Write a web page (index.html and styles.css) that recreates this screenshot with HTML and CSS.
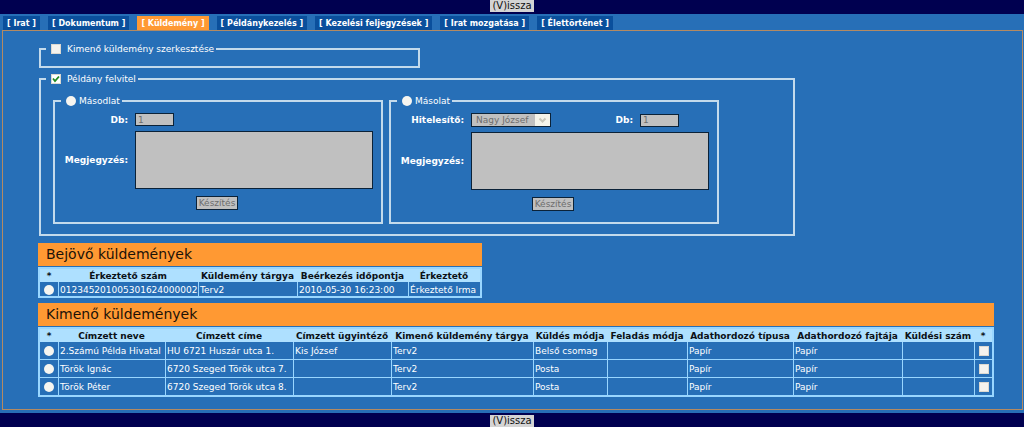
FILE: index.html
```html
<!DOCTYPE html>
<html lang="hu">
<head>
<meta charset="utf-8">
<title>Küldemény</title>
<link rel="stylesheet" href="styles.css">
</head>
<body>
<header class="bar bar-top"><button type="button" class="back">(V)issza</button></header>
<nav class="tabs">
  <a class="tab" href="#">[ Irat ]</a>
  <a class="tab" href="#">[ Dokumentum ]</a>
  <a class="tab active" href="#">[ Küldemény ]</a>
  <a class="tab" href="#">[ Példánykezelés ]</a>
  <a class="tab" href="#">[ Kezelési feljegyzések ]</a>
  <a class="tab" href="#">[ Irat mozgatása ]</a>
  <a class="tab" href="#">[ Élettörténet ]</a>
</nav>
<main class="panel">
  <fieldset class="group edit">
    <legend><label><input type="checkbox" class="check">Kimenő küldemény szerkesztése</label></legend>
  </fieldset>
  <fieldset class="group create">
    <legend><label><input type="checkbox" class="check" checked>Példány felvitel</label></legend>
    <div class="copies">
      <fieldset class="group copy">
        <legend><label><input type="radio" name="kind" class="radio">Másodlat</label></legend>
        <div class="form">
          <label for="db1">Db:</label>
          <div class="line"><input id="db1" class="field count" value="1" disabled></div>
          <label for="note1">Megjegyzés:</label>
          <textarea id="note1" class="field note" disabled></textarea>
          <button type="button" class="field make" disabled>Készítés</button>
        </div>
      </fieldset>
      <fieldset class="group copy">
        <legend><label><input type="radio" name="kind" class="radio">Másolat</label></legend>
        <div class="form">
          <label for="auth">Hitelesítő:</label>
          <div class="line">
            <span class="pick"><select id="auth" class="field" disabled><option>Nagy József</option></select><svg class="arrow" viewBox="0 0 15 12" aria-hidden="true"><rect width="15" height="12" fill="#f5f4ea"/><path d="M4.5 4.5 7.5 7.5 10.5 4.5" fill="none" stroke="#c9c7ba" stroke-width="2"/></svg></span>
            <span class="pair"><label for="db2">Db:</label><input id="db2" class="field count" value="1" disabled></span>
          </div>
          <label for="note2">Megjegyzés:</label>
          <textarea id="note2" class="field note" disabled></textarea>
          <button type="button" class="field make" disabled>Készítés</button>
        </div>
      </fieldset>
    </div>
  </fieldset>

  <section class="list incoming">
    <h2>Bejövő küldemények</h2>
    <table>
      <colgroup><col class="w18"><col class="w140"><col class="w99"><col class="w111"><col class="w72"></colgroup>
      <thead><tr><th>*</th><th>Érkeztető szám</th><th>Küldemény tárgya</th><th>Beérkezés időpontja</th><th>Érkeztető</th></tr></thead>
      <tbody><tr><td class="mark"><input type="radio" name="in" class="radio" aria-label="Terv2"></td><td>012345201005301624000002</td><td>Terv2</td><td>2010-05-30 16:23:00</td><td>Érkeztető Irma</td></tr></tbody>
    </table>
  </section>

  <section class="list outgoing">
    <h2>Kimenő küldemények</h2>
    <table>
      <colgroup><col class="w18"><col class="w107"><col class="w128"><col class="w98"><col class="w142"><col class="w74"><col class="w80"><col class="w106"><col class="w109"><col class="w72"><col class="w18"></colgroup>
      <thead><tr><th>*</th><th>Címzett neve</th><th>Címzett címe</th><th>Címzett ügyintéző</th><th>Kimenő küldemény tárgya</th><th>Küldés módja</th><th>Feladás módja</th><th>Adathordozó típusa</th><th>Adathordozó fajtája</th><th>Küldési szám</th><th>*</th></tr></thead>
      <tbody>
        <tr><td class="mark"><input type="radio" name="out" class="radio" aria-label="2.Számú Példa Hivatal"></td><td>2.Számú Példa Hivatal</td><td>HU 6721 Huszár utca 1.</td><td>Kis József</td><td>Terv2</td><td>Belső csomag</td><td></td><td>Papír</td><td>Papír</td><td></td><td class="mark"><input type="checkbox" class="check" aria-label="2.Számú Példa Hivatal"></td></tr>
        <tr><td class="mark"><input type="radio" name="out" class="radio" aria-label="Török Ignác"></td><td>Török Ignác</td><td>6720 Szeged Török utca 7.</td><td></td><td>Terv2</td><td>Posta</td><td></td><td>Papír</td><td>Papír</td><td></td><td class="mark"><input type="checkbox" class="check" aria-label="Török Ignác"></td></tr>
        <tr><td class="mark"><input type="radio" name="out" class="radio" aria-label="Török Péter"></td><td>Török Péter</td><td>6720 Szeged Török utca 8.</td><td></td><td>Terv2</td><td>Posta</td><td></td><td>Papír</td><td>Papír</td><td></td><td class="mark"><input type="checkbox" class="check" aria-label="Török Péter"></td></tr>
      </tbody>
    </table>
  </section>
</main>
<footer class="bar bar-bottom"><button type="button" class="back">(V)issza</button></footer>
</body>
</html>
```
FILE: styles.css
```css
* { box-sizing: border-box; }
body {
  margin: 0;
  background: #276fb7;
  color: #fff;
  font: 9px/12px Verdana, "DejaVu Sans", sans-serif;
}
input, select, textarea, button { font: inherit; margin: 0; }

.bar { display: flex; justify-content: center; background: #000050; height: 14px; }
.bar-bottom { margin-top: 3px; padding-top: 2px; }
.back {
  height: 12px;
  padding: 0 2px;
  border: 0;
  background: #d4d4d4;
  color: #111;
  font-size: 10px;
  line-height: 12px;
}

.tabs { display: flex; gap: 8px; margin-top: 2px; padding-left: 3px; }
.tab {
  height: 14px;
  padding: 0 4px;
  background: #0a4f9c;
  color: #fff;
  font-size: 8px;
  font-weight: bold;
  line-height: 15px;
  text-decoration: none;
  white-space: nowrap;
}
.tab.active { background: #ff9933; }

.panel { margin: 0 1px 0 2px; padding: 12px 28px 12px 35px; border: 1px solid #b48a62; }

.group { min-width: 0; margin: 0; padding: 0; border: 2px solid #c3daec; }
.group legend { margin-left: 5px; padding: 0 2px 0 5px; }
.group legend label { display: flex; align-items: center; height: 12px; }
.check {
  appearance: none;
  width: 10px;
  height: 10px;
  border: 1px solid #dcd8d0;
  background: #f4f2ee;
}
.check:checked {
  background: #fff url("data:image/svg+xml,%3Csvg xmlns='http://www.w3.org/2000/svg' viewBox='0 0 8 8'%3E%3Cpath d='M1 3.5 3 6 7 1.5' fill='none' stroke='%23218a21' stroke-width='1.8'/%3E%3C/svg%3E");
}
.radio { appearance: none; width: 10px; height: 10px; border-radius: 50%; background: #f6f5f0; }
legend .check { margin-right: 6px; }
legend .radio { margin-right: 3px; }
.edit { width: 381px; height: 25px; margin-left: 1px; }
.create { width: 756px; margin: 5px 0 0 1px; padding: 10px 0 10px 12px; }
.create > legend { margin-left: -7px; }
.copies { display: flex; gap: 6px; }
.copy { width: 330px; padding: 6px 8px 11px 6px; }
.copy > legend { margin-left: 0; }
.form { display: grid; grid-template-columns: 67px 238px; column-gap: 7px; row-gap: 5px; align-items: center; }
.form label { font-weight: bold; text-align: right; }
.line { display: flex; align-items: center; justify-content: space-between; }
.field {
  appearance: none;
  border: 1px solid #0b2238;
  border-radius: 0;
  background: #c0c0c0;
  color: #6d6d6d;
}
.count { width: 39px; height: 13px; padding: 0 2px; }
.note { display: block; width: 100%; height: 58px; resize: none; }
.make { grid-column: 1 / -1; justify-self: center; height: 14px; margin-top: 2px; padding: 0 2px; line-height: 12px; }
.pick { display: grid; width: 80px; }
.pick .field { grid-area: 1 / 1; width: 80px; height: 14px; padding: 0 4px; opacity: 1; }
.arrow { grid-area: 1 / 1; place-self: center end; width: 15px; height: 12px; margin-right: 1px; }
.pair { display: flex; align-items: center; gap: 7px; margin-right: 30px; }

.list h2 {
  margin: 0 0 1px;
  padding-left: 8px;
  background: #ff9933;
  color: #1c1208;
  font-size: 14px;
  font-weight: normal;
  line-height: 23px;
}
.incoming { width: 444px; margin-top: 7px; }
.outgoing { margin-top: 5px; }
.list table { width: 100%; table-layout: fixed; border-collapse: separate; border-spacing: 0; border: 2px solid #99d6ff; }
.list th { height: 13px; padding: 0; background: #aee0ff; color: #0b1016; white-space: nowrap; }
.list td { height: 18px; padding: 0 1px; border: 0 solid #99d6ff; border-width: 1px 0 0 1px; white-space: nowrap; }
.list tbody tr:first-child td { height: 17px; border-top: 0; }
.list td:first-child { border-left: 0; }
.incoming tbody tr:first-child td { height: 14px; padding-top: 1px; }
.list .mark { padding: 0; }
.mark input { display: block; margin: 0 auto; }
.w18 { width: 18px; }
.w72 { width: 72px; }
.w74 { width: 74px; }
.w80 { width: 80px; }
.w98 { width: 98px; }
.w99 { width: 99px; }
.w106 { width: 106px; }
.w107 { width: 107px; }
.w109 { width: 109px; }
.w111 { width: 111px; }
.w128 { width: 128px; }
.w140 { width: 140px; }
.w142 { width: 142px; }
```
